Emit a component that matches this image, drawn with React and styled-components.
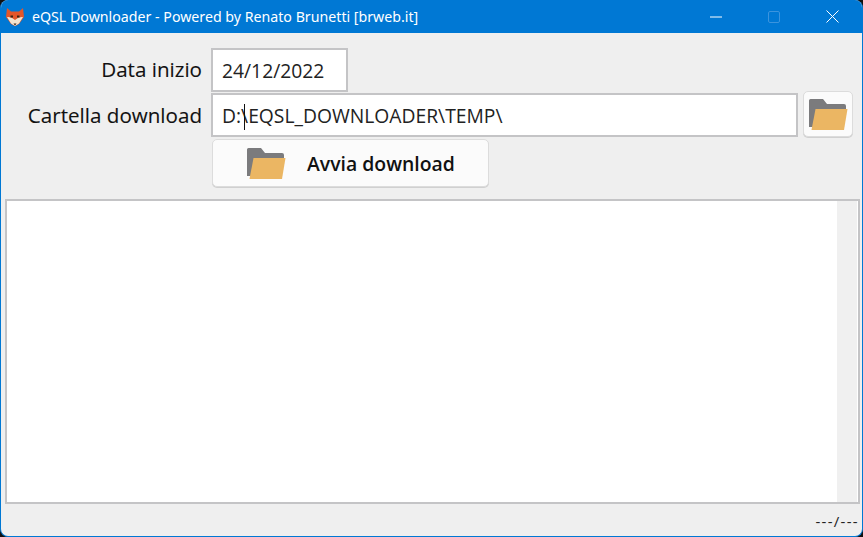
import React from "react";
import styled, { createGlobalStyle } from "styled-components";

const Global = createGlobalStyle`
  html, body { margin: 0; padding: 0; background: #111; width: 863px; height: 537px; overflow: hidden; }
  * { box-sizing: border-box; }
`;

const Win = styled.div`
  width: 863px; height: 537px; background: #efefef; border-radius: 8px; overflow: hidden;
  border: 1px solid #0078d4; border-top: 0;
  display: flex; flex-direction: column;
  font-family: "Open Sans", "Noto Sans", sans-serif; color: #111;
`;
const TitleBar = styled.header`
  height: 33px; flex: none; background: #0078d4; color: #fff; margin: 0 -1px;
  display: flex; align-items: center; padding-left: 6px;
`;
const Title = styled.div`
  margin-left: 8px; font-size: 14.2px; flex: 1; white-space: nowrap;
  font-family: "Noto Sans", sans-serif;
`;
const Controls = styled.div`display: flex; height: 33px; padding-right: 2px;`;
const Ctl = styled.div`
  width: 58px; display: flex; align-items: center; justify-content: center;
  svg { display: block; }
`;
const Body = styled.main`
  flex: 1; display: flex; flex-direction: column; padding: 15px 1px 0 4px; min-height: 0;
`;
const Form = styled.div`
  display: grid; grid-template-columns: 201px 587px 50px; column-gap: 5px;
  grid-template-rows: 44px 44px 50px; align-items: start; row-gap: 1px;
`;
const Label = styled.label`
  font-size: 20.6px; text-align: right; line-height: 42px; height: 44px; white-space: nowrap; padding-right: 4px;
  -webkit-text-stroke: 0.1px #111;
`;
const PathLabel = styled(Label)`line-height: 45px;`;
const Field = styled.div`
  height: 44px; width: ${p => p.$w || "100%"}; background: #fff; border: 2px solid #c4c4c6;
  font-size: 19.3px; line-height: 42px; padding-left: 9px; white-space: nowrap;
  color: #222;
`;
const Caret = styled.span`
  display: inline-block; width: 1px; height: 26px; background: #111; margin: 0 -4px 0 3px; vertical-align: middle; position: relative; top: -1px;
`;
const IconBtn = styled.button`
  width: 50px; height: 46px; margin-top: -2px; border: 1px solid #dcdcdc; border-radius: 5px; background: #fbfbfb;
  display: flex; align-items: center; justify-content: center; padding: 0;
  box-shadow: 0 1px 0 #d0d0d0;
`;
const WideBtn = styled.button`
  grid-column: 2; width: 277px; height: 48px; margin: 1px 0 0 1px; border: 1px solid #dcdcdc; border-radius: 5px; background: #fbfbfb;
  display: flex; align-items: center; padding: 0 0 0 33px; gap: 21px;
  font: 600 19.4px "Open Sans", sans-serif; color: #111; box-shadow: 0 1px 0 #d0d0d0;
`;
const Log = styled.div`
  margin-top: 11px; height: 305px; width: 855px; border: 2px solid #c4c4c6; background: #fff;
  display: flex; justify-content: flex-end;
`;
const Scroll = styled.div`
  width: 20px; background: #f0f0f0; margin-right: 1px;
`;
const Status = styled.footer`
  flex: 1; display: flex; align-items: flex-start; justify-content: flex-end; padding: 8px 2px 0 0;
  font-size: 15px; letter-spacing: 1.3px; color: #222; line-height: 18px;
`;

const Folder = () => (
  <svg width="40" height="34" viewBox="0 0 40 34">
    <path d="M1 30V3.5Q1 2 2.5 2H15l4 5h17Q38 7 38 9v3H9L5 30Z" fill="#7b7b7d" />
    <path d="M7.5 12H39.5L36 33H3.5Z" fill="#ebb663" />
  </svg>
);

const Fox = () => (
  <svg width="18" height="18" viewBox="0 0 18 18">
    <path d="M1 0L5 3.5H13L17 0L18 9L13 16L9 18L5 16L0 9Z" fill="#e4562a" />
    <path d="M1 9Q5.5 8.5 9 12Q12.5 8.5 17 9L13 15.5L9 18L5 15.5Z" fill="#f3e4cf" />
    <path d="M4.5 7.5h2.5v2H4.500zM11 7.500h2.500v2H11z" fill="#3a2414" />
    <path d="M7.500 15.500h3L9 17.500Z" fill="#3a2414" />
  </svg>
);

export default function App() {
  return (
    <>
      <Global />
      <Win>
        <TitleBar>
          <Fox />
          <Title>eQSL Downloader - Powered by Renato Brunetti [brweb.it]</Title>
          <Controls>
            <Ctl>
              <svg width="12" height="12" viewBox="0 0 12 12"><path d="M0 6h12" stroke="#fff" strokeWidth="1" /></svg>
            </Ctl>
            <Ctl>
              <svg width="12" height="12" viewBox="0 0 12 12"><rect x="0.5" y="0.5" width="11" height="11" rx="1.5" fill="none" stroke="#3b94de" /></svg>
            </Ctl>
            <Ctl>
              <svg width="13" height="13" viewBox="0 0 13 13"><path d="M.5.5l12 12M12.5.5l-12 12" stroke="#fff" strokeWidth="1" /></svg>
            </Ctl>
          </Controls>
        </TitleBar>
        <Body>
          <Form>
            <Label>Data inizio</Label>
            <Field $w="137px">24/12/2022</Field>
            <span />
            <PathLabel>Cartella download</PathLabel>
            <Field>D:<Caret />\EQSL_DOWNLOADER\TEMP\</Field>
            <IconBtn><Folder /></IconBtn>
            <WideBtn><Folder />Avvia download</WideBtn>
          </Form>
          <Log><Scroll /></Log>
          <Status>---/---</Status>
        </Body>
      </Win>
    </>
  );
}
